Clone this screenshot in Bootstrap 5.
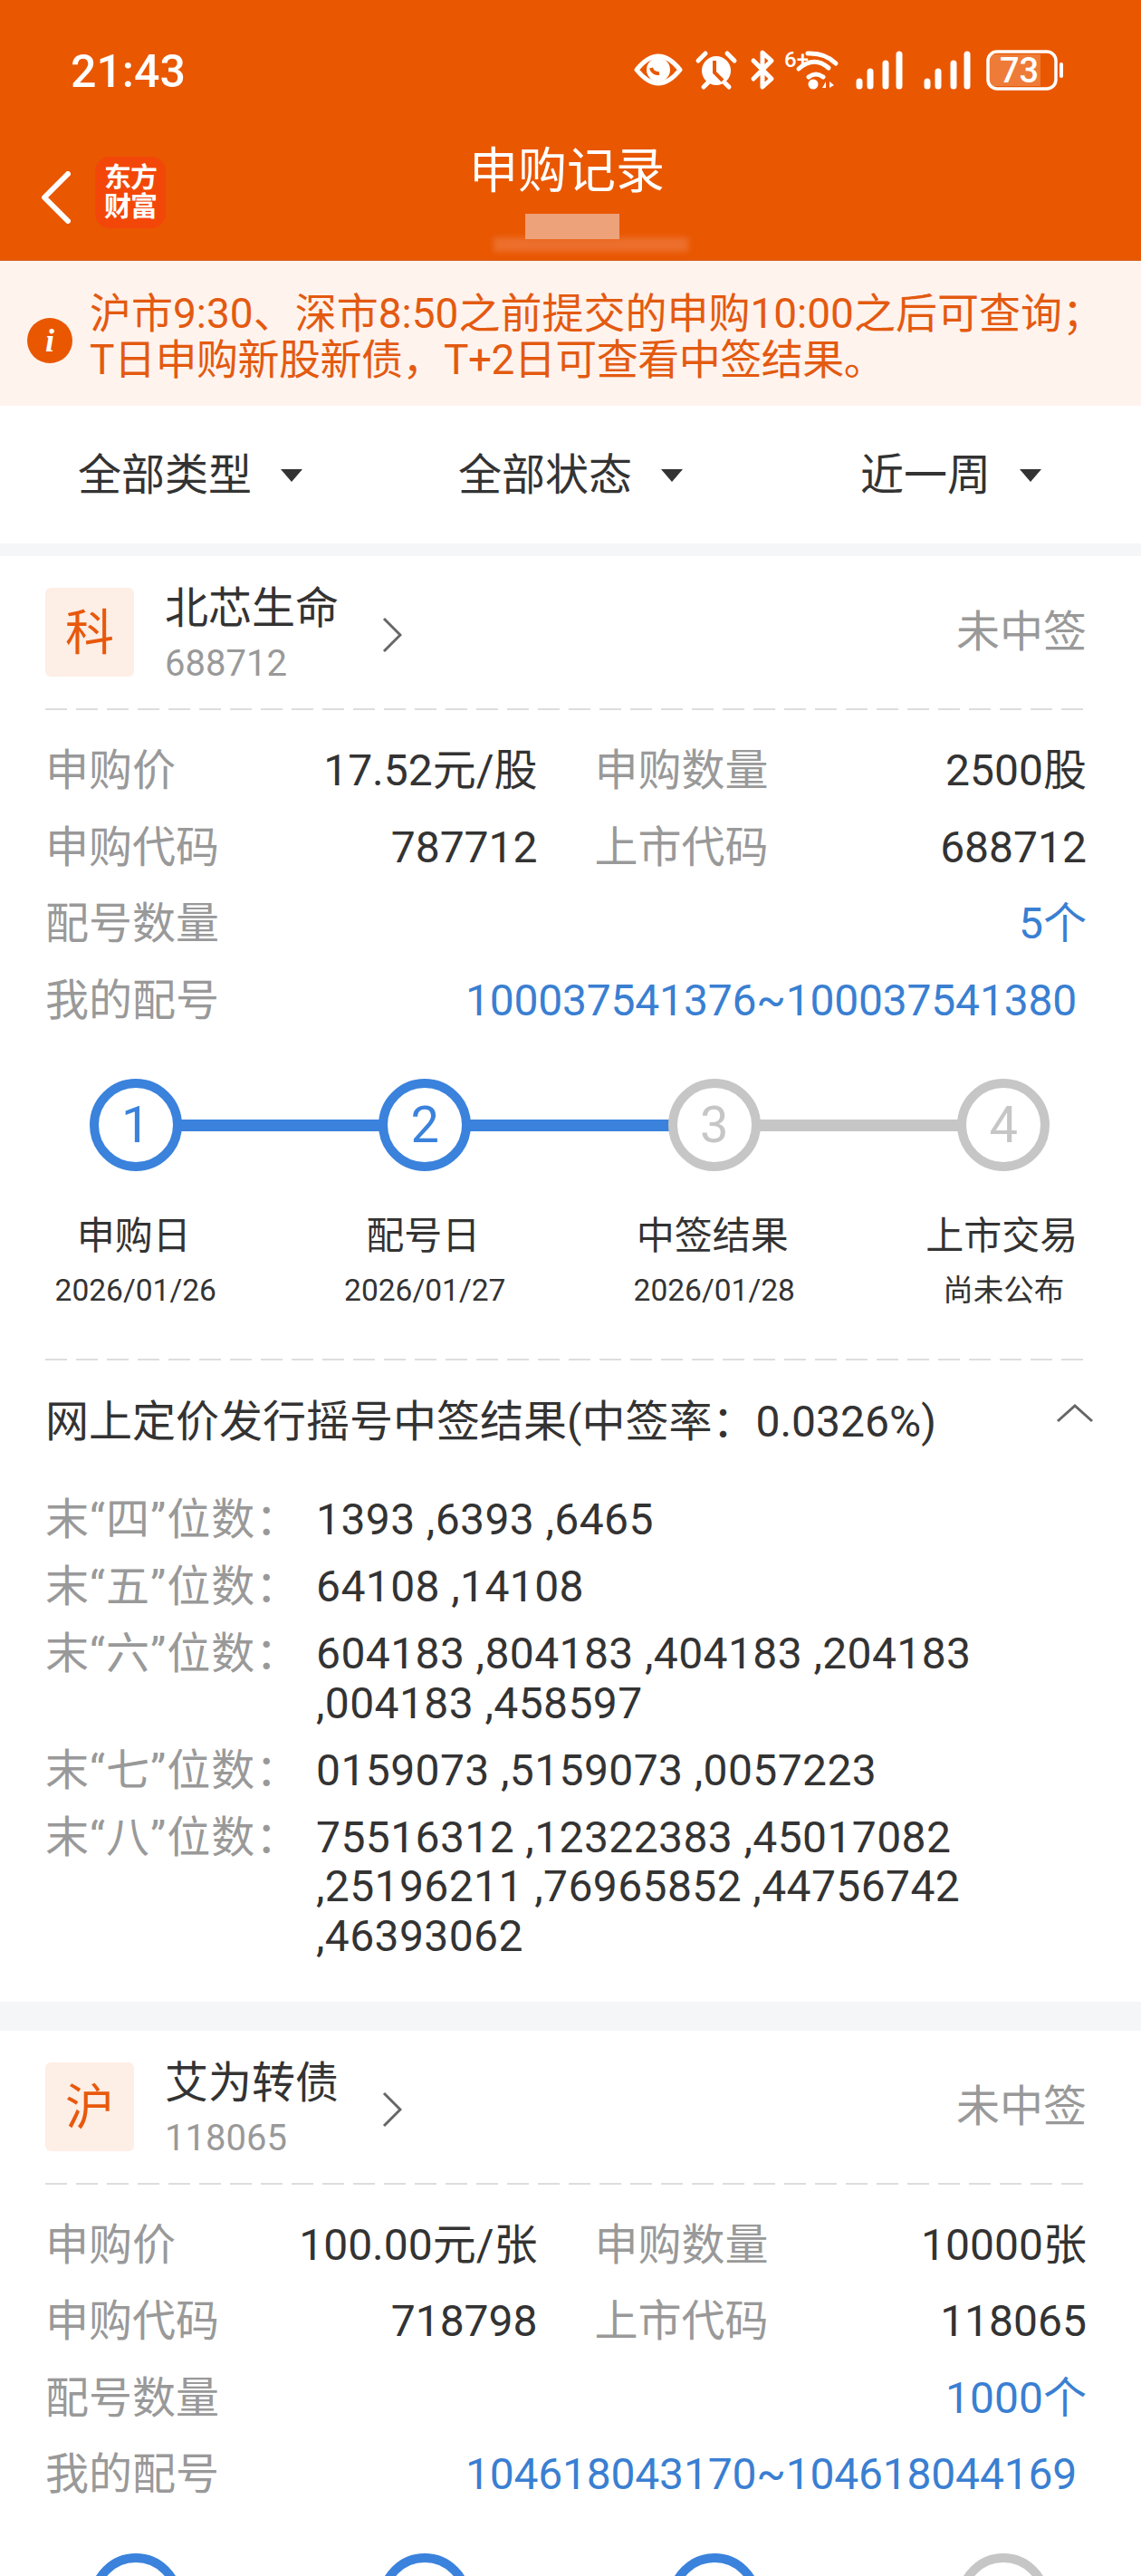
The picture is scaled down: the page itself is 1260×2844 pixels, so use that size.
<!DOCTYPE html>
<html lang="zh-CN">
<head>
<meta charset="UTF-8" />
<title>申购记录</title>
<link href="https://cdn.jsdelivr.net/npm/bootstrap@5.3.0/dist/css/bootstrap.min.css" rel="stylesheet" />
<style>
html, body { margin: 0; background: #f5f6f8; }
body { font-family: Roboto, "Noto Sans CJK SC", sans-serif; color: #333; }
.phone { width: 1260px; height: 2844px; overflow: hidden; }

.app-head { height: 288px; background: #e95700; color: #fff; border-bottom: 1px solid #d2601f; }
.status-line { height: 158px; padding: 0 85px 0 78px; }
.clock { font-size: 50px; font-weight: 500; line-height: 1; }
.status-icons svg { display: block; }
.nav-line { height: 129px; display: grid; grid-template-columns: 1fr auto 1fr; }
.nav-left { padding: 15px 0 0 45px; gap: 27px; }
.logo-box { width: 78px; height: 79px; background: #f3470a; border-radius: 16px; font-size: 30px; line-height: 32px; font-weight: 700; text-align: center; padding-top: 7px; letter-spacing: -1px; }
.nav-title { font-size: 54px; line-height: 64px; text-align: center; margin-left: -4px; margin-right: 4px; }
.blur-name { position: relative; height: 46px; margin-top: 14px; }
.blur-name i { position: absolute; display: block; }
.blur-a { left: 58px; top: 0; width: 104px; height: 28px; background: #eda27a; }
.blur-b { left: 23px; top: 26px; width: 215px; height: 16px; background: #ec6f2c; filter: blur(3px); }

.tip-band { height: 160px; background: #fff3ee; color: #e35a10; font-size: 46px; line-height: 51px; padding: 33px 0 0 30px; gap: 19px; }
.tip-dot { width: 50px; height: 50px; border-radius: 50%; background: #e95700; color: #fff; font-family: "Liberation Serif", serif; font-style: italic; font-weight: 700; font-size: 36px; line-height: 50px; text-align: center; margin-top: 30px; flex: none; }
.tip-second { letter-spacing: -.5px; }

.filter-band { height: 152px; background: #fff; }
.filter-item { font-size: 48px; line-height: 1; gap: 32px; height: 152px; padding-top: 2px; }
.tri-down { width: 0; height: 0; border-left: 12px solid transparent; border-right: 12px solid transparent; border-top: 14px solid #333; }

.ipo-card { background: #fff; padding: 0 60px 0 50px; margin-top: 14px; }
.ipo-card.next-card { margin-top: 32px; }
.card-top { height: 168px; padding-top: 35px; }
.type-tag { width: 98px; height: 98px; background: #fdeee6; color: #e8590c; border-radius: 6px; font-size: 54px; line-height: 102px; text-align: center; flex: none; }
.name-wrap { margin-left: 34px; }
.stock-name { font-size: 48px; line-height: 56px; margin-top: -5px; }
.stock-code { font-size: 40px; line-height: 48px; color: #999; margin-top: 9px; }
.go-arrow { margin: 32px 0 0 48px; }
.result-state { font-size: 48px; color: #999; line-height: 98px; }
.dash-line { height: 2px; background: repeating-linear-gradient(90deg, #ddd 0, #ddd 24px, transparent 24px, transparent 34px); }

.info-rows { padding-top: 25px; }
.info-row { height: 84.5px; font-size: 48px; line-height: 84.5px; }
.info-cell { width: 544px; }
.info-gap { width: 63px; }
.info-key { color: #999; }
.info-blue { color: #3a7fd2; }
.ticket-no { padding-right: 11px; letter-spacing: -.2px; }

.step-line { margin: 44px -68px 0 -60px; }
.step-col { width: 319.5px; position: relative; text-align: center; }
.step-ring { width: 102px; height: 102px; border-radius: 50%; border: 10px solid #c6c6c6; color: #c6c6c6; font-size: 56px; line-height: 82px; margin: 0 auto; background: #fff; position: relative; z-index: 1; }
.step-col.done .step-ring { border-color: #3a82dc; color: #3a82dc; }
.step-col::after { content: ""; position: absolute; left: 50%; top: 45px; width: 100%; height: 13px; background: #c6c6c6; }
.step-col.done::after { background: #3a82dc; }
.step-col:last-child::after { display: none; }
.step-name { font-size: 42px; line-height: 48px; margin-top: 48px; padding-right: 4px; }
.step-date { font-size: 33.5px; line-height: 40px; margin-top: 16px; }
.steps-end { margin-top: 55px; }

.lot-title { font-size: 48px; line-height: 56px; padding-top: 40px; position: relative; }
.up-arrow { position: absolute; right: -8px; top: 47px; }
.lot-list { padding-top: 53px; padding-bottom: 25px; }
.lot-row { font-size: 48px; line-height: 54.5px; margin-bottom: 19.5px; letter-spacing: .4px; }
.lot-key { width: 299px; color: #999; flex: none; letter-spacing: 1px; }
</style>
</head>
<body>
<div class="phone">
	<header class="app-head">
		<div class="status-line d-flex align-items-center justify-content-between">
			<div class="clock">21:43</div>
			<div class="status-icons d-flex align-items-center">
				<svg width="475" height="50" viewBox="0 0 475 50" fill="none">
					<g transform="translate(-701 -55)">
						<!-- eye -->
						<path d="M704 78 Q728 48 752 78 Q728 108 704 78Z" stroke="#fff" stroke-width="5" stroke-linejoin="round"/>
						<circle cx="728" cy="78" r="13" fill="#fff"/>
						<path d="M720 76a8 8 0 0 0 9 6" stroke="#e95700" stroke-width="4"/>
						<!-- alarm -->
						<circle cx="792" cy="79" r="16" fill="#fff"/>
						<path d="M772 68l8-8M812 68l-8-8M778 97l5-5M806 97l-5-5" stroke="#fff" stroke-width="5" stroke-linecap="round"/>
						<path d="M790 68v13l9 9" stroke="#e95700" stroke-width="4"/>
						<!-- bluetooth -->
						<path d="M833 68l20 20-10 9V59l10 9-20 20" stroke="#fff" stroke-width="5" stroke-linejoin="round" stroke-linecap="round"/>
						<!-- wifi -->
						<path d="M893 60Q912 59 924 71M883 77Q900 62 916 76M894 86Q902 80 910 86" stroke="#fff" stroke-width="5" stroke-linecap="round"/>
						<circle cx="899" cy="94" r="5.5" fill="#fff"/>
						<path d="M909 98l4-7v7zM917 91l5 4-5 3z" fill="#fff"/>
						<!-- signal 1 -->
						<path d="M950 91v5M962 80v16M979 71v25M994 61v35" stroke="#fff" stroke-width="7" stroke-linecap="round"/>
						<!-- signal 2 -->
						<path d="M1025 91v5M1037 80v16M1054 71v25M1069 61v35" stroke="#fff" stroke-width="7" stroke-linecap="round"/>
						<!-- battery -->
						<rect x="1092" y="58" width="75" height="41" rx="10" stroke="#fff" stroke-width="3.5"/>
						<path d="M1096 61h54v35h-54q-3 0-3-3V64q0-3 3-3z" fill="#fff" fill-opacity=".22"/>
						<path d="M1173 72v13" stroke="#fff" stroke-width="4" stroke-linecap="round"/>
					</g>
					<text x="166" y="20" font-family="Roboto, sans-serif" font-size="24" font-weight="500" fill="#fff">6+</text>
					<text x="404" y="37" font-family="Roboto, sans-serif" font-size="38" font-weight="500" fill="#fff">73</text>
				</svg>
			</div>
		</div>
		<div class="nav-line">
			<div class="nav-left d-flex align-items-start">
				<svg class="mt-3" width="33" height="58" viewBox="0 0 33 58" fill="none"><path d="M30 3L4 29l26 26" stroke="#fff" stroke-width="6" stroke-linecap="round" stroke-linejoin="round"/></svg>
				<div class="logo-box">东方<br>财富</div>
			</div>
			<div>
				<div class="nav-title">申购记录</div>
				<div class="blur-name"><i class="blur-b"></i><i class="blur-a"></i></div>
			</div>
			<div></div>
		</div>
	</header>

	<section class="tip-band d-flex">
		<div class="tip-dot">i</div>
		<div class="text-nowrap">沪市9:30、深市8:50之前提交的申购10:00之后可查询；<br><span class="tip-second">T日申购新股新债，T+2日可查看中签结果。</span></div>
	</section>

	<section class="filter-band row g-0">
		<div class="col-4 filter-item d-flex align-items-center justify-content-center">全部类型<span class="tri-down"></span></div>
		<div class="col-4 filter-item d-flex align-items-center justify-content-center">全部状态<span class="tri-down"></span></div>
		<div class="col-4 filter-item d-flex align-items-center justify-content-center">近一周<span class="tri-down"></span></div>
	</section>

	<article class="ipo-card">
		<div class="card-top d-flex">
			<div class="type-tag">科</div>
			<div class="name-wrap">
				<div class="stock-name">北芯生命</div>
				<div class="stock-code">688712</div>
			</div>
			<svg class="go-arrow" width="22" height="40" viewBox="0 0 22 40" fill="none"><path d="M2 2l18 18L2 38" stroke="#666" stroke-width="3"/></svg>
			<div class="result-state ms-auto">未中签</div>
		</div>
		<div class="dash-line"></div>
		<div class="info-rows">
			<div class="info-row d-flex">
				<div class="info-cell d-flex justify-content-between"><span class="info-key">申购价</span><span>17.52元/股</span></div>
				<div class="info-gap"></div>
				<div class="info-cell d-flex justify-content-between"><span class="info-key">申购数量</span><span>2500股</span></div>
			</div>
			<div class="info-row d-flex">
				<div class="info-cell d-flex justify-content-between"><span class="info-key">申购代码</span><span>787712</span></div>
				<div class="info-gap"></div>
				<div class="info-cell d-flex justify-content-between"><span class="info-key">上市代码</span><span>688712</span></div>
			</div>
			<div class="info-row d-flex justify-content-between"><span class="info-key">配号数量</span><span class="info-blue">5个</span></div>
			<div class="info-row d-flex justify-content-between"><span class="info-key">我的配号</span><span class="info-blue ticket-no">100037541376~100037541380</span></div>
		</div>
		<div class="step-line d-flex">
			<div class="step-col done"><div class="step-ring">1</div><div class="step-name">申购日</div><div class="step-date">2026/01/26</div></div>
			<div class="step-col done"><div class="step-ring">2</div><div class="step-name">配号日</div><div class="step-date">2026/01/27</div></div>
			<div class="step-col"><div class="step-ring">3</div><div class="step-name">中签结果</div><div class="step-date">2026/01/28</div></div>
			<div class="step-col"><div class="step-ring">4</div><div class="step-name">上市交易</div><div class="step-date">尚未公布</div></div>
		</div>
		<div class="dash-line steps-end"></div>
		<div class="lot-title">网上定价发行摇号中签结果(中签率：0.0326%)
			<svg class="up-arrow" width="42" height="22" viewBox="0 0 42 22" fill="none"><path d="M2 20L21 3l19 17" stroke="#666" stroke-width="3"/></svg>
		</div>
		<div class="lot-list">
			<div class="lot-row d-flex"><div class="lot-key">末“四”位数：</div><div>1393 ,6393 ,6465</div></div>
			<div class="lot-row d-flex"><div class="lot-key">末“五”位数：</div><div>64108 ,14108</div></div>
			<div class="lot-row d-flex"><div class="lot-key">末“六”位数：</div><div>604183 ,804183 ,404183 ,204183<br>,004183 ,458597</div></div>
			<div class="lot-row d-flex"><div class="lot-key">末“七”位数：</div><div>0159073 ,5159073 ,0057223</div></div>
			<div class="lot-row d-flex"><div class="lot-key">末“八”位数：</div><div>75516312 ,12322383 ,45017082<br>,25196211 ,76965852 ,44756742<br>,46393062</div></div>
		</div>
	</article>

	<article class="ipo-card next-card">
		<div class="card-top d-flex">
			<div class="type-tag">沪</div>
			<div class="name-wrap">
				<div class="stock-name">艾为转债</div>
				<div class="stock-code">118065</div>
			</div>
			<svg class="go-arrow" width="22" height="40" viewBox="0 0 22 40" fill="none"><path d="M2 2l18 18L2 38" stroke="#666" stroke-width="3"/></svg>
			<div class="result-state ms-auto">未中签</div>
		</div>
		<div class="dash-line"></div>
		<div class="info-rows">
			<div class="info-row d-flex">
				<div class="info-cell d-flex justify-content-between"><span class="info-key">申购价</span><span>100.00元/张</span></div>
				<div class="info-gap"></div>
				<div class="info-cell d-flex justify-content-between"><span class="info-key">申购数量</span><span>10000张</span></div>
			</div>
			<div class="info-row d-flex">
				<div class="info-cell d-flex justify-content-between"><span class="info-key">申购代码</span><span>718798</span></div>
				<div class="info-gap"></div>
				<div class="info-cell d-flex justify-content-between"><span class="info-key">上市代码</span><span>118065</span></div>
			</div>
			<div class="info-row d-flex justify-content-between"><span class="info-key">配号数量</span><span class="info-blue">1000个</span></div>
			<div class="info-row d-flex justify-content-between"><span class="info-key">我的配号</span><span class="info-blue ticket-no">104618043170~104618044169</span></div>
		</div>
		<div class="step-line d-flex">
			<div class="step-col done"><div class="step-ring"></div></div>
			<div class="step-col done"><div class="step-ring"></div></div>
			<div class="step-col done"><div class="step-ring"></div></div>
			<div class="step-col"><div class="step-ring"></div></div>
		</div>
	</article>
</div>
<script src="https://cdn.jsdelivr.net/npm/bootstrap@5.3.0/dist/js/bootstrap.bundle.min.js"></script>
</body>
</html>
